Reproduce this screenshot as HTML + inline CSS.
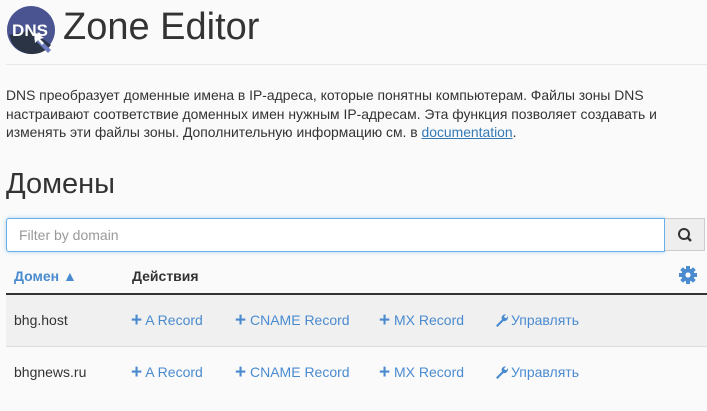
<!DOCTYPE html>
<html><head><meta charset="utf-8"><style>
body{margin:0;background:#fafafa;font-family:"Liberation Sans",Arial,sans-serif;color:#333;width:707px;height:411px;overflow:hidden;position:relative}
.abs{position:absolute}
.title{left:63px;top:6px;font-size:38px;color:#333;white-space:nowrap}
.hr{left:6px;top:64px;width:701px;height:1px;background:#e8e8e8}
.p{left:6px;top:86px;width:690px;font-size:13.9px;line-height:18.7px;color:#333}
.p a{color:#337ab7;text-decoration:underline}
.h2{left:6px;top:168px;font-size:29px;color:#333}
.inp{left:6px;top:218px;width:657px;height:32px;border:1px solid #66afe9;border-radius:3px 0 0 3px;background:#fff;box-shadow:0 0 4px rgba(102,175,233,.5)}
.inp span{position:absolute;left:12px;top:8px;font-size:14px;color:#999}
.btn{left:665px;top:218px;width:40px;height:33px;background:#eee;border:1px solid #ccc;border-left:none;box-sizing:border-box}
.th{top:268px;font-size:14px;font-weight:bold}
.line{left:6px;top:293px;width:701px;height:2px;background:#333}
.row{left:6px;width:701px;height:51px}
.cell{font-size:14px;top:0;line-height:51px;position:absolute;white-space:nowrap}
.lnk{color:#4a8bd0}
.plus{font-weight:bold;font-size:19px;vertical-align:-1px}
.wr{display:inline-block;vertical-align:-2px;margin-right:3px}
</style></head><body>
<svg class="abs" style="left:6px;top:5px" width="50" height="50" viewBox="0 0 50 50">
<circle cx="25" cy="25" r="24" fill="#4a5491"/>
<path d="M3 30 L25 25 L45 40 A24 24 0 0 1 6 38 Z" fill="#2b3445"/>
<path d="M30 30 L45 45 L42 48 L28 34 Z" fill="#6f7dc0"/>
<text x="24" y="31" font-family="Liberation Sans" font-weight="bold" font-size="17" fill="#fff" text-anchor="middle">DNS</text>
<path d="M28 27 L29 38 L32 35 L36 40 L38 38 L34 34 L38 33 Z" fill="#fff"/>
</svg>
<div class="abs title">Zone Editor</div>
<div class="abs hr"></div>
<div class="abs p">DNS преобразует доменные имена в IP-адреса, которые понятны компьютерам. Файлы зоны DNS настраивают соответствие доменных имен нужным IP-адресам. Эта функция позволяет создавать и изменять эти файлы зоны. Дополнительную информацию см. в <a>documentation</a>.</div>
<div class="abs h2">Домены</div>
<div class="abs inp"><span>Filter by domain</span></div>
<div class="abs btn"><svg width="40" height="33"><circle cx="19" cy="15" r="5" fill="none" stroke="#333" stroke-width="2"/><line x1="22.5" y1="18.5" x2="26" y2="22" stroke="#333" stroke-width="2.4"/></svg></div>
<div class="abs th" style="left:14px;color:#4a8bd0">Домен ▲</div>
<div class="abs th" style="left:132px;color:#333">Действия</div>
<svg class="abs" style="left:679px;top:266px" width="18" height="18" viewBox="0 0 18 18"><g fill="#4a8bd0"><circle cx="9" cy="9" r="6.5"/><rect x="7" y="0" width="4" height="18"/><rect x="0" y="7" width="18" height="4"/><rect x="7" y="0" width="4" height="18" transform="rotate(45 9 9)"/><rect x="7" y="0" width="4" height="18" transform="rotate(-45 9 9)"/></g><circle cx="9" cy="9" r="2.6" fill="#fafafa"/></svg>
<div class="abs line"></div>
<div class="abs row" style="top:295px;background:#f0f0f0;border-bottom:1px solid #ddd">
<span class="cell" style="left:8px">bhg.host</span>
<span class="cell lnk" style="left:125px"><span class="plus">+</span> A Record</span>
<span class="cell lnk" style="left:229px"><span class="plus">+</span> CNAME Record</span>
<span class="cell lnk" style="left:373px"><span class="plus">+</span> MX Record</span>
<span class="cell lnk" style="left:489px"><svg class="wr" width="13" height="14" viewBox="0 0 13 14"><path d="M1 12.5 L7 6.5 A3.5 3.5 0 0 1 11 1.5 L9 3.5 L10 5 L11.5 5 L12.5 3 A3.5 3.5 0 0 1 8.5 8 L2.5 14 Z" fill="#4a8bd0"/></svg>Управлять</span>
</div>
<div class="abs row" style="top:347px">
<span class="cell" style="left:8px">bhgnews.ru</span>
<span class="cell lnk" style="left:125px"><span class="plus">+</span> A Record</span>
<span class="cell lnk" style="left:229px"><span class="plus">+</span> CNAME Record</span>
<span class="cell lnk" style="left:373px"><span class="plus">+</span> MX Record</span>
<span class="cell lnk" style="left:489px"><svg class="wr" width="13" height="14" viewBox="0 0 13 14"><path d="M1 12.5 L7 6.5 A3.5 3.5 0 0 1 11 1.5 L9 3.5 L10 5 L11.5 5 L12.5 3 A3.5 3.5 0 0 1 8.5 8 L2.5 14 Z" fill="#4a8bd0"/></svg>Управлять</span>
</div>
</body></html>
